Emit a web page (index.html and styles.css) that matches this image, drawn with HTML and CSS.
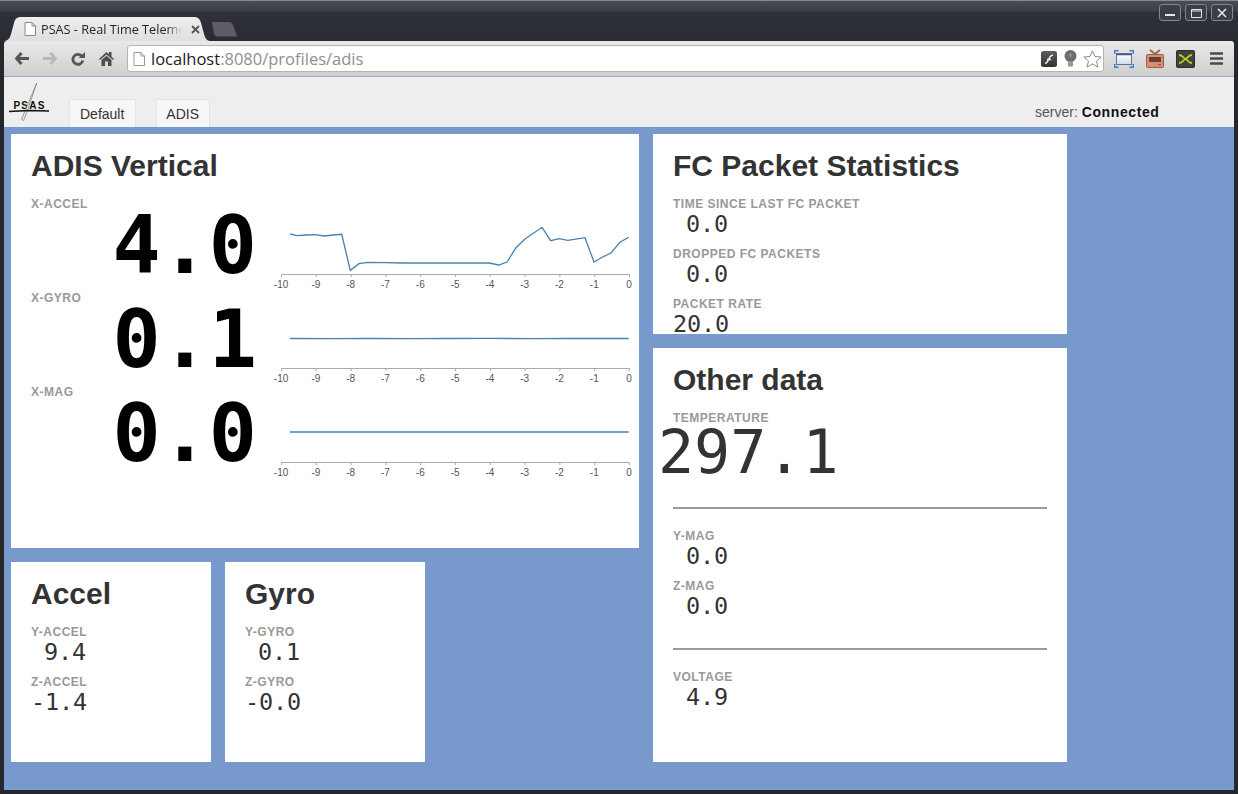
FILE: index.html
```html
<!DOCTYPE html>
<html lang="en">
<head>
<meta charset="utf-8">
<title>PSAS - Real Time Telemetry</title>
<link rel="stylesheet" href="styles.css">
</head>
<body>
<div class="window">
  <div class="titlebar">
    <div class="tabs">
      <div class="tab">
        <svg class="tab-shape" width="206" height="24" viewBox="0 0 206 24"><path d="M0 24C4 24 6 21 7 17L10 6C11 2 13 0 17 0H190C194 0 196 2 197 6L200 17C201 21 203 24 206 24Z" fill="url(#tabfill)"/><defs><linearGradient id="tabfill" x1="0" y1="0" x2="0" y2="1"><stop offset="0" stop-color="#eeeeee"/><stop offset="1" stop-color="#dfdfdf"/></linearGradient></defs></svg>
        <svg class="page-icon" width="12" height="14" viewBox="0 0 12 14"><path d="M1 .5H8L11.500 4V13.500H1Z M8 .5V4H11.500" fill="#fff" stroke="#8a8a8a"/></svg>
        <span class="tab-title">PSAS - Real Time Telemetry</span>
        <svg class="tab-close" width="9" height="9" viewBox="0 0 9 9"><path d="M1 1L8 8M8 1L1 8" stroke="#555" stroke-width="1.800"/></svg>
      </div>
      <svg class="newtab" width="25" height="15" viewBox="0 0 25 15"><path d="M0 0H17C19 0 20 1 21 3L25 14.500H6C4 14.500 3 14 2 12Z" fill="#5d5e64"/></svg>
    </div>
    <div class="winbtns">
      <div class="winbtn"><svg width="22" height="16" viewBox="0 0 22 16"><path d="M6 10H16" stroke="#e6e6e6" stroke-width="2"/></svg></div>
      <div class="winbtn"><svg width="22" height="16" viewBox="0 0 22 16"><path d="M6.500 4.500H16.500V12.500H6.500ZM6.500 6H16.500" fill="none" stroke="#e6e6e6"/></svg></div>
      <div class="winbtn"><svg width="22" height="16" viewBox="0 0 22 16"><path d="M7 4L15 12M15 4L7 12" stroke="#e6e6e6" stroke-width="1.600"/></svg></div>
    </div>
  </div>

  <div class="toolbar">
    <div class="nav">
      <svg width="14" height="13" viewBox="0 0 14 13"><path d="M6.500 1L1.500 6.500L6.500 12M2 6.500H14" fill="none" stroke="#555" stroke-width="3"/></svg>
      <svg width="14" height="13" viewBox="0 0 14 13"><path d="M7.500 1L12.500 6.500L7.500 12M12 6.500H0" fill="none" stroke="#b8b8b8" stroke-width="3"/></svg>
      <svg width="14" height="14" viewBox="0 0 14 14"><path d="M11 4.500A5 5 0 1 0 11.800 8.500" fill="none" stroke="#555" stroke-width="2.800"/><path d="M7.500 6H14V0Z" fill="#555"/></svg>
      <svg width="15" height="15" viewBox="0 0 15 15"><path d="M0 8L7.500 1L10 3.300V1H12.500V5.700L15 8L14 9L7.500 3.500L1 9ZM2.500 9L7.500 4.800L12.500 9V15H9V10.500H6V15H2.500Z" fill="#4c4c4c"/></svg>
    </div>
    <div class="omnibox">
      <svg width="12" height="14" viewBox="0 0 12 14"><path d="M1 .5H8L11.500 4V13.500H1Z M8 .5V4H11.500" fill="#fff" stroke="#999"/></svg>
      <span class="url"><span class="url-host">localhost</span>:8080/profiles/adis</span>
      <div class="omni-icons">
        <svg width="16" height="16" viewBox="0 0 16 16"><defs><linearGradient id="flashfill" x1="0" y1="0" x2="0" y2="1"><stop offset="0" stop-color="#5c5c5c"/><stop offset="1" stop-color="#333"/></linearGradient></defs><rect width="16" height="16" rx="2.500" fill="url(#flashfill)"/><path d="M4 12.500C6.500 12 7 10 8 7.500C8.700 5.500 10 4.500 12 4M6 8.500H10" fill="none" stroke="#eee" stroke-width="1.600"/></svg>
        <svg width="13" height="17" viewBox="0 0 13 17"><circle cx="6.500" cy="6" r="6" fill="#6c6c6c"/><path d="M4 9H9V11H4Z" fill="#6c6c6c"/><rect x="4" y="11" width="5" height="5.500" rx="1" fill="#8a8a8a"/><circle cx="6.500" cy="5" r="2" fill="#8a8a8a"/><path d="M3.500 13H9.500M3.500 15H9.500" stroke="#bbb" stroke-width=".6"/></svg>
        <svg width="19" height="18" viewBox="0 0 19 18"><path d="M9.500 .8L12 6.500L18.200 7L13.500 11L15 17.200L9.500 13.900L4 17.200L5.500 11L.8 7L7 6.500Z" fill="#fff" stroke="#8a8a8a"/></svg>
      </div>
    </div>
    <div class="extensions">
      <svg width="20" height="18" viewBox="0 0 20 18"><defs><linearGradient id="scrfill" x1="0" y1="0" x2="0" y2="1"><stop offset="0" stop-color="#fff"/><stop offset="1" stop-color="#d4dde6"/></linearGradient></defs><rect x="2.500" y="3.500" width="15" height="11" fill="url(#scrfill)" stroke="#5a7590"/><path d="M3 4.500H17" stroke="#3d5f85" stroke-width="1.500"/><path d="M.7 4V.7H4.500M15.500 .7H19.300V4M.7 14V17.300H4.500M15.500 17.300H19.300V14" fill="none" stroke="#3f7fc0" stroke-width="1.400"/></svg>
      <svg width="18" height="19" viewBox="0 0 18 19"><path d="M4 1L9 5L14 1" fill="none" stroke="#9a6a55" stroke-width="2"/><rect x=".5" y="5.500" width="17" height="13" rx="1" fill="#d78d70" stroke="#96604a"/><rect x="3" y="8" width="12" height="5" fill="#6a3f2e"/><path d="M12 15.500H15" stroke="#8a5743" stroke-width="1.200"/></svg>
      <svg width="19" height="18" viewBox="0 0 19 18"><rect x=".5" y=".5" width="18" height="17" rx="1" fill="#414141" stroke="#2e2e2e"/><path d="M3 5C7 5 7 8 9.500 9C12 8 12 5 16 5M3 13C7 13 7 10 9.500 9C12 10 12 13 16 13" fill="none" stroke="#a9dc1c" stroke-width="1.800"/></svg>
      <svg class="menu" width="13" height="13" viewBox="0 0 13 13"><path d="M0 1.500H13M0 6.500H13M0 11.500H13" stroke="#4a4a4a" stroke-width="2.400"/></svg>
    </div>
  </div>

  <header class="apphead">
    <div class="logo">
      <span class="logo-text">PSAS</span>
      <svg class="logo-art" width="42" height="38" viewBox="0 0 42 38"><path d="M27.700 0L12.500 36.500L14.500 37.500L18 29L27.700 0Z" fill="#eeeeee" stroke="#777" stroke-width=".7"/><path d="M0 28.500L20 27.500L40 28" stroke="#111" stroke-width="1.500" fill="none"/></svg>
    </div>
    <nav class="pagetabs">
      <a class="pagetab">Default</a>
      <a class="pagetab">ADIS</a>
    </nav>
    <div class="server">server: <b>Connected</b></div>
  </header>

  <main class="board">
    <section class="card card-adis">
      <h2>ADIS Vertical</h2>
      <div class="gauge">
        <div class="label">X-ACCEL</div>
        <div class="gauge-value">4.0</div>
        <svg class="chart" width="368" height="94" viewBox="0 0 368 94">
          <path class="trace" d="M20 37L27.300 38.700L36.700 38L45 37.700L54.300 39L63.300 38L71.700 37.300L80.300 73.300L89 66.700L97.700 65.300L115 65.700L133.300 66L150 66L166.700 66L185 66L200 66L219.300 66L228.700 68L237 65L246 50.700L254.700 42.300L272 30.300L280.700 43.700L289 41.700L297.700 43.300L315 40.700L324 65L332.700 60L341 56L350 45.300L358.700 40.300"/>
          <path class="axis" d="M11.500 80V77.500H359.500V80M46.300 77.500V80M81.100 77.500V80M115.900 77.500V80M150.700 77.500V80M185.500 77.500V80M220.300 77.500V80M255.100 77.500V80M289.900 77.500V80M324.700 77.500V80"/>
          <g class="ticks" transform="translate(-.4 0)"><text x="11.500" y="91">-10</text><text x="46.300" y="91">-9</text><text x="81.100" y="91">-8</text><text x="115.900" y="91">-7</text><text x="150.700" y="91">-6</text><text x="185.500" y="91">-5</text><text x="220.300" y="91">-4</text><text x="255.100" y="91">-3</text><text x="289.900" y="91">-2</text><text x="324.700" y="91">-1</text><text x="359.500" y="91">0</text></g>
        </svg>
      </div>
      <div class="gauge">
        <div class="label">X-GYRO</div>
        <div class="gauge-value">0.1</div>
        <svg class="chart" width="368" height="94" viewBox="0 0 368 94">
          <path class="trace" d="M20 47.500L60 47.700L100 47.500L140 47.600L180 47.500L220 47.400L260 47.600L300 47.500L358.700 47.500"/>
          <path class="axis" d="M11.500 80V77.500H359.500V80M46.300 77.500V80M81.100 77.500V80M115.900 77.500V80M150.700 77.500V80M185.500 77.500V80M220.300 77.500V80M255.100 77.500V80M289.900 77.500V80M324.700 77.500V80"/>
          <g class="ticks" transform="translate(-.4 0)"><text x="11.500" y="91">-10</text><text x="46.300" y="91">-9</text><text x="81.100" y="91">-8</text><text x="115.900" y="91">-7</text><text x="150.700" y="91">-6</text><text x="185.500" y="91">-5</text><text x="220.300" y="91">-4</text><text x="255.100" y="91">-3</text><text x="289.900" y="91">-2</text><text x="324.700" y="91">-1</text><text x="359.500" y="91">0</text></g>
        </svg>
      </div>
      <div class="gauge">
        <div class="label">X-MAG</div>
        <div class="gauge-value">0.0</div>
        <svg class="chart" width="368" height="94" viewBox="0 0 368 94">
          <path class="trace" d="M20 47H358.700"/>
          <path class="axis" d="M11.500 80V77.500H359.500V80M46.300 77.500V80M81.100 77.500V80M115.900 77.500V80M150.700 77.500V80M185.500 77.500V80M220.300 77.500V80M255.100 77.500V80M289.900 77.500V80M324.700 77.500V80"/>
          <g class="ticks" transform="translate(-.4 0)"><text x="11.500" y="91">-10</text><text x="46.300" y="91">-9</text><text x="81.100" y="91">-8</text><text x="115.900" y="91">-7</text><text x="150.700" y="91">-6</text><text x="185.500" y="91">-5</text><text x="220.300" y="91">-4</text><text x="255.100" y="91">-3</text><text x="289.900" y="91">-2</text><text x="324.700" y="91">-1</text><text x="359.500" y="91">0</text></g>
        </svg>
      </div>
    </section>

    <section class="card card-fc">
      <h2>FC Packet Statistics</h2>
      <div class="metric"><div class="label">TIME SINCE LAST FC PACKET</div><div class="value">0.0</div></div>
      <div class="metric"><div class="label">DROPPED FC PACKETS</div><div class="value">0.0</div></div>
      <div class="metric"><div class="label">PACKET RATE</div><div class="value">20.0</div></div>
    </section>

    <section class="card card-other">
      <h2>Other data</h2>
      <div class="metric-large"><div class="label">TEMPERATURE</div><div class="value-large">297.1</div></div>
      <hr class="rule">
      <div class="metric"><div class="label">Y-MAG</div><div class="value">0.0</div></div>
      <div class="metric"><div class="label">Z-MAG</div><div class="value">0.0</div></div>
      <hr class="rule rule-tight">
      <div class="metric"><div class="label">VOLTAGE</div><div class="value">4.9</div></div>
    </section>

    <section class="card card-accel">
      <h2>Accel</h2>
      <div class="metric"><div class="label">Y-ACCEL</div><div class="value">9.4</div></div>
      <div class="metric"><div class="label">Z-ACCEL</div><div class="value">-1.4</div></div>
    </section>

    <section class="card card-gyro">
      <h2>Gyro</h2>
      <div class="metric"><div class="label">Y-GYRO</div><div class="value">0.1</div></div>
      <div class="metric"><div class="label">Z-GYRO</div><div class="value">-0.0</div></div>
    </section>
  </main>
</div>
</body>
</html>
```

FILE: styles.css
```css
* { box-sizing: border-box; }
html, body { margin: 0; padding: 0; height: 100%; overflow: hidden; }
body { font-family: "Liberation Sans", Arial, sans-serif; color: #333; background: #2a2a2a; }
.window { width: 1238px; height: 794px; display: flex; flex-direction: column; background: #26272b; padding: 0 4px 4px; border-top: 1px solid #8a8a8a; }

.titlebar { height: 40px; margin: 0 -4px; padding: 0 4px; flex: none; display: flex; justify-content: space-between; background: linear-gradient(#4a4c53 0, #3c3e45 10px, #2f3038 11px, #2a2c34 100%); }
.tabs { display: flex; align-items: flex-start; padding-top: 16px; }
.tab { position: relative; width: 206px; height: 24px; display: flex; align-items: center; }
.tab-shape { position: absolute; left: 0; top: 0; }
.page-icon { position: relative; margin-left: 20px; flex: none; }
.tab-title { position: relative; margin-left: 5px; width: 141px; white-space: nowrap; overflow: hidden; font: 12.700px "Open Sans", sans-serif; color: #222; -webkit-mask-image: linear-gradient(to right, #000 125px, transparent 141px); mask-image: linear-gradient(to right, #000 125px, transparent 141px); }
.tab-close { position: relative; margin-left: 9px; flex: none; }
.newtab { margin: 5px 0 0 2px; }
.winbtns { display: flex; gap: 4px; padding-top: 3px; padding-right: 1px; align-items: flex-start; }
.winbtn { width: 22px; height: 17px; border: 1px solid #85878e; border-radius: 3px; display: flex; align-items: center; justify-content: center; background: #3c3e45; }
.winbtn svg { flex: none; }

.toolbar { height: 35px; flex: none; display: flex; align-items: center; background: linear-gradient(#e9e9e9, #cfcfcf); border-radius: 3px 3px 0 0; padding-left: 11px; }
.nav { display: flex; align-items: center; width: 112px; gap: 14px; }
.omnibox { width: 977px; height: 27px; background: #fff; border: 1px solid #b5b5b5; border-radius: 3px; display: flex; align-items: center; padding-left: 5px; }
.url { margin-left: 6px; font: 16.500px "Open Sans", sans-serif; color: #8f8f8f; white-space: nowrap; }
.url-host { color: #222; }
.omni-icons { margin-left: auto; display: flex; align-items: center; gap: 6.500px; padding-right: 1px; }
.extensions { display: flex; align-items: center; margin-left: 10px; gap: 12px; }
.menu { margin-left: 3px; }

.apphead { height: 51px; flex: none; display: flex; align-items: flex-end; background: #eeeeee; border-top: 1px solid #a9a5c9; }
.logo { position: relative; width: 42px; height: 38px; margin: 0 0 6px 5px; flex: none; }
.logo-text { position: absolute; left: 4.500px; top: 18px; font: bold 10px/10px "Liberation Sans", sans-serif; letter-spacing: 1.200px; color: #111; }
.logo-art { position: absolute; left: 0; top: 0; }
.pagetabs { display: flex; gap: 20px; margin-left: 18px; }
.pagetab { height: 28px; padding: 0 10px; background: #f7f7f7; border: 1px solid #e4e4e4; border-bottom: 0; font-size: 14px; line-height: 28px; color: #333; }
.pagetab:first-child { padding-right: 11px; }
.pagetab:last-child { padding-left: 9px; padding-right: 10px; }
.server { margin-left: auto; margin-right: 74.500px; padding-bottom: 7px; font-size: 14px; color: #555; }
.server b { color: #111; letter-spacing: .6px; }

.board { flex: 1; min-height: 0; display: grid; grid-template-columns: repeat(5, 200px); grid-template-rows: repeat(3, 200px); gap: 14px; padding: 7px; background: #7799cc; align-content: start; }
.card { background: #fff; padding: 14px 20px 0; overflow: hidden; min-width: 0; }
.card-adis { grid-column: 1 / span 3; grid-row: 1 / span 2; }
.card-fc { grid-column: 4 / span 2; grid-row: 1; }
.card-other { grid-column: 4 / span 2; grid-row: 2 / span 2; }
.card-accel { grid-column: 1; grid-row: 3; }
.card-gyro { grid-column: 2; grid-row: 3; }
h2 { margin: 0 0 13px; font-size: 30px; line-height: 36px; font-weight: bold; color: #333; }

.label { font-size: 12px; line-height: 14px; height: 14px; font-weight: bold; color: #999; letter-spacing: .5px; white-space: nowrap; }
.metric { height: 50px; }
.value { width: 55px; height: 28px; font: 23.500px/26px "DejaVu Sans Mono", monospace; letter-spacing: -.15px; text-align: right; color: #333; white-space: nowrap; }
.metric-large { height: 96px; }
.value-large { margin-left: -15px; font: 60px/54px "DejaVu Sans Mono", monospace; color: #333; white-space: nowrap; }
.rule { margin: 0 0 20px; border: 0; height: 2px; background: #999; }
.rule-tight { margin-top: 19px; }

.gauge { display: grid; grid-template-columns: 226px 368px; grid-template-rows: 14px 80px; column-gap: 13px; height: 94px; }
.gauge .label { grid-column: 1; grid-row: 1; }
.gauge-value { grid-column: 1; grid-row: 2; font: bold 80px/70px "DejaVu Sans Mono", monospace; color: #000; text-align: right; white-space: nowrap; }
.chart { grid-column: 2; grid-row: 1 / span 2; display: block; }
.trace { fill: none; stroke: #4682b4; stroke-width: 1.300; }
.axis { fill: none; stroke: #aaaaaa; stroke-width: 1; }
.ticks text { font: 10px "Liberation Sans", sans-serif; fill: #555; text-anchor: middle; }
```
